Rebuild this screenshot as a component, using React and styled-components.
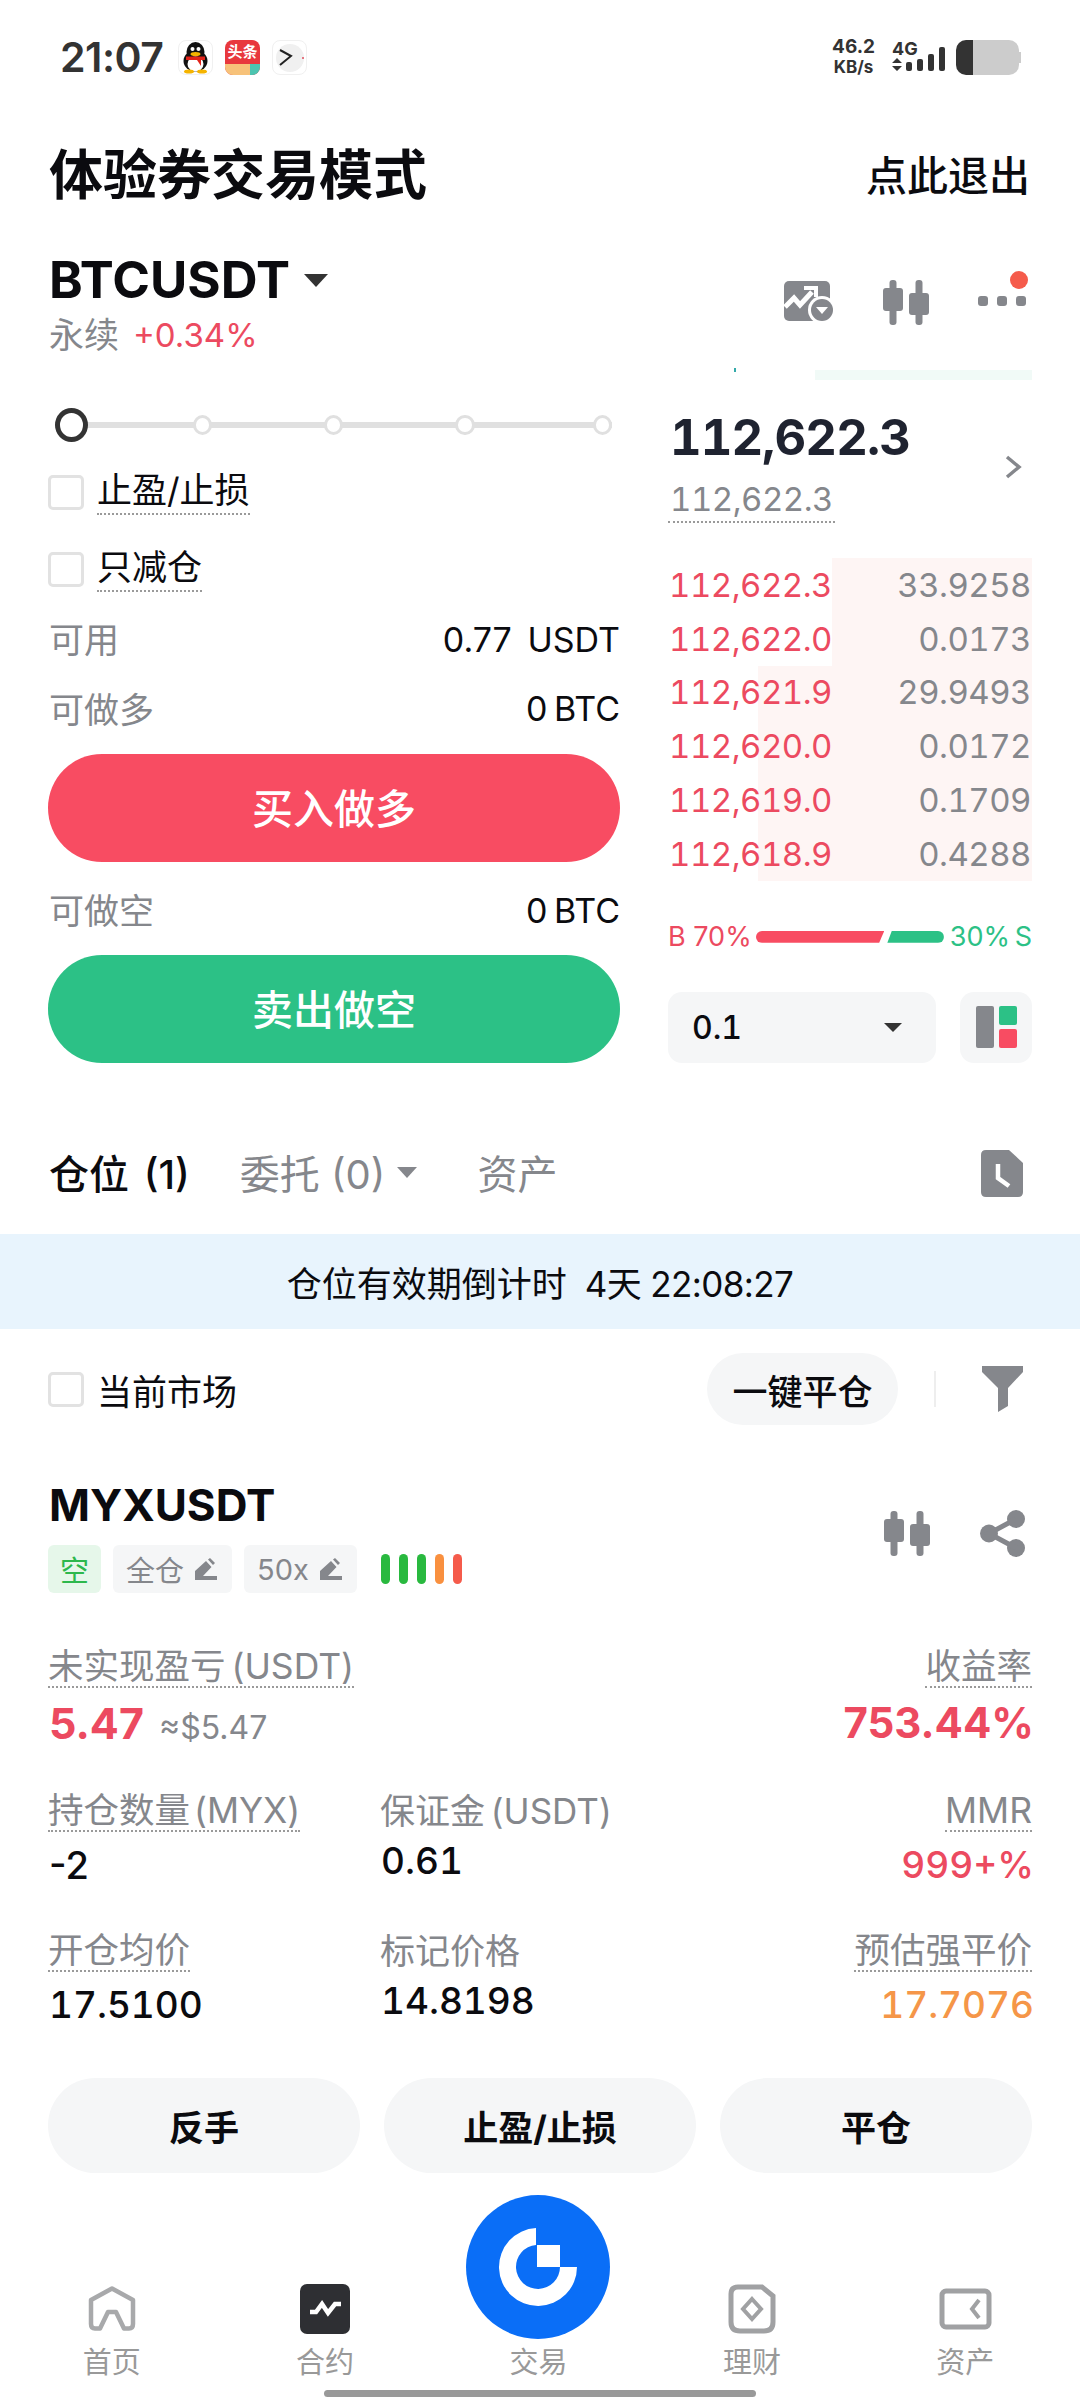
import React from "react";
import styled, { createGlobalStyle } from "styled-components";

const RED = "#f84c62";
const TEXT_RED = "#ec4a60";
const GREEN = "#2cc186";
const GRAY = "#85878c";
const SOFT = "#f5f6f7";

const GlobalStyle = createGlobalStyle`
	* { box-sizing: border-box; }
	html, body { margin: 0; padding: 0; background: #fff; }
	body { font-family: Inter, "Noto Sans CJK SC", sans-serif; color: #0b0b0f; }
`;

const Page = styled.div`
	width: 1080px;
	height: 2400px;
	overflow: hidden;
	background: #fff;
`;

const StatusBar = styled.div`
	height: 114px;
	padding: 0 58px 0 60px;
	display: flex;
	align-items: center;
`;

const Clock = styled.span`
	font-size: 41px;
	font-weight: 600;
	color: #333;
	width: 118px;
	letter-spacing: -0.5px;
`;

const AppIcons = styled.div`
	display: flex;
	gap: 12px;
`;

const AppIcon = styled.div`
	width: 35px;
	height: 35px;
	border-radius: 8px;
	overflow: hidden;
	border: 1px solid #f0f0f0;
	background: #fff;
`;

const NewsIcon = styled(AppIcon)`
	border: 0;
	background: #e8383d;
	display: flex;
	flex-direction: column;
	align-items: center;
	color: #fff;
	font-size: 15px;
	font-weight: 700;
	line-height: 24px;
	&::after {
		content: "";
		align-self: stretch;
		height: 11px;
		background: linear-gradient(90deg, #f7c27a 70%, #4cc4b0 70%);
	}
`;

const StatusRight = styled.div`
	margin-left: auto;
	display: flex;
	align-items: center;
	color: #333;
`;

const Speed = styled.div`
	display: flex;
	flex-direction: column;
	align-items: center;
	font-size: 19px;
	font-weight: 700;
	line-height: 20px;
	margin-right: 16px;
	width: 45px;
	small {
		font-size: 17px;
		font-weight: 700;
		white-space: nowrap;
	}
`;

const Network = styled.div`
	display: flex;
	flex-direction: column;
	font-size: 18px;
	font-weight: 700;
	line-height: 19px;
	margin-right: 11px;
	height: 36px;
`;

const Battery = styled.div`
	position: relative;
	width: 63px;
	height: 35px;
	margin-right: 3px;
	border-radius: 10px;
	background: linear-gradient(90deg, #333 27%, #ccc 27%);
	&::after {
		content: "";
		position: absolute;
		right: -2px;
		top: 12px;
		width: 2px;
		height: 11px;
		background: #ccc;
	}
`;

const HeaderRow = styled.div`
	height: 118px;
	padding: 0 50px 0 49px;
	display: flex;
	align-items: center;
	justify-content: space-between;
`;

const Title = styled.h1`
	margin: 0;
	font-size: 54px;
	font-weight: 700;
	padding-bottom: 3px;
`;

const ExitLink = styled.span`
	font-size: 41px;
	font-weight: 500;
`;

const MarketRow = styled.div`
	margin-top: 24px;
	height: 106px;
	padding: 0 50px 0 49px;
	display: flex;
	justify-content: space-between;
`;

const Symbol = styled.div`
	display: flex;
	align-items: center;
	font-size: 51px;
	font-weight: 700;
	line-height: 48px;
`;

const Caret = styled.i`
	display: inline-block;
	width: 0;
	height: 0;
	margin-left: ${(p) => p.$gap || 14}px;
	border-left: ${(p) => p.$size || 12}px solid transparent;
	border-right: ${(p) => p.$size || 12}px solid transparent;
	border-top: ${(p) => (p.$size || 12) * 1.1}px solid ${(p) => p.$color || "#333"};
`;

const SubLine = styled.div`
	margin-top: 10px;
	font-size: 35px;
	line-height: 42px;
	color: ${GRAY};
	display: flex;
	gap: 14px;
`;

const Change = styled.span`
	color: ${TEXT_RED};
	font-size: 33px;
`;

const MarketIcons = styled.div`
	display: flex;
	align-items: center;
	height: 86px;
	margin-right: 4px;
	gap: 49px;
	padding-top: 6px;
`;

const MoreButton = styled.div`
	position: relative;
	display: flex;
	gap: 9px;
	padding-bottom: 2px;
	&::after {
		content: "";
		position: absolute;
		right: -2px;
		top: -25px;
		width: 18px;
		height: 18px;
		border-radius: 50%;
		background: #f55b4b;
	}
`;

const MoreDot = styled.span`
	width: 10px;
	height: 10px;
	border-radius: 3px;
	background: ${GRAY};
`;

const DepthHint = styled.div`
	position: relative;
	height: 10px;
	margin: 8px 48px 0 815px;
	background: #f1faf7;
	&::before {
		content: "";
		position: absolute;
		left: -81px;
		top: -2px;
		width: 2px;
		height: 4px;
		background: #3aa;
	}
`;

const TradeSection = styled.div`
	padding: 5px 48px 0;
	display: grid;
	grid-template-columns: 572px 364px;
	justify-content: space-between;
`;

const OrderForm = styled.div`
	padding-top: 23px;
	display: flex;
	flex-direction: column;
`;

const Slider = styled.div`
	height: 34px;
	width: 557px;
	margin: 0 0 33px 7px;
	display: flex;
	align-items: center;
	background: linear-gradient(#e0e0e0, #e0e0e0) center / 100% 6px no-repeat;
`;

const Thumb = styled.span`
	width: 34px;
	height: 34px;
	border-radius: 50%;
	background: #fff;
	border: 5px solid #333;
`;

const Knob = styled.span`
	width: 20px;
	height: 20px;
	border-radius: 50%;
	background: #fff;
	border: 3px solid #e0e0e0;
	margin-left: ${(p) => p.$gap}px;
`;

const CheckRow = styled.div`
	height: 52px;
	display: flex;
	align-items: flex-start;
	gap: 13px;
	margin-bottom: ${(p) => p.$gap || 0}px;
`;

const CheckBox = styled.span`
	flex: none;
	width: 36px;
	height: 35px;
	border: 3px solid #e2e2e2;
	border-radius: 5px;
	background: #fff;
`;

const Dotted = styled.span`
	display: block;
	width: fit-content;
	line-height: ${(p) => p.$line || 38}px;
	font-size: ${(p) => p.$size || 35.5}px;
	word-spacing: ${(p) => p.$spacing ?? -4}px;
	color: ${(p) => p.$color || "inherit"};
	border-bottom: 2px dotted #9a9a9a;
`;

const CheckLabel = styled(Dotted)`
	font-size: 35px;
	line-height: 30px;
	padding-bottom: 8px;
`;

const InfoRow = styled.div`
	height: ${(p) => p.$h || 70}px;
	padding: ${(p) => p.$top || 0}px 0 0 1px;
	display: flex;
	align-items: center;
	justify-content: space-between;
	font-size: 35px;
`;

const InfoLabel = styled.span`
	color: ${GRAY};
	padding-bottom: 3px;
`;

const InfoValue = styled.span`
	font-size: 34px;
	word-spacing: ${(p) => p.$spacing}px;
`;

const TradeButton = styled.div`
	height: 108px;
	border-radius: 54px;
	background: ${(p) => p.$bg};
	color: #fff;
	font-size: 41px;
	font-weight: 500;
	padding-bottom: 4px;
	display: flex;
	align-items: center;
	justify-content: center;
	margin-top: ${(p) => p.$top}px;
`;

const BookColumn = styled.div`
	display: flex;
	flex-direction: column;
	font-variant-numeric: tabular-nums;
`;

const PriceBlock = styled.div`
	padding-top: 28px;
	height: 173px;
	position: relative;
`;

const LastPrice = styled.div`
	font-size: 49px;
	font-weight: 700;
	line-height: 50px;
	color: #1f2330;
	padding-left: 2px;
	letter-spacing: -0.9px;
`;

const MarkPrice = styled(Dotted)`
	margin-top: 14px;
	color: ${GRAY};
	padding: 0 2px;
	font-size: 33px;
	letter-spacing: -0.5px;
`;

const Chevron = styled.svg`
	position: absolute;
	right: 10px;
	top: 70px;
`;

const BookRow = styled.div`
	height: 53.8px;
	display: flex;
	justify-content: space-between;
	align-items: center;
	padding: 0 1px 0 1px;
	font-size: 33px;
	letter-spacing: -0.5px;
	background: linear-gradient(90deg, transparent ${(p) => p.$from}px, #fef5f4 ${(p) => p.$from}px);
`;

const BookPrice = styled.span`
	color: ${TEXT_RED};
`;

const BookQty = styled.span`
	color: ${GRAY};
`;

const RatioRow = styled.div`
	margin-top: 40px;
	height: 32px;
	display: flex;
	align-items: center;
	font-size: 27px;
	font-variant-numeric: normal;
`;

const RatioText = styled.span`
	color: ${(p) => p.$color};
	white-space: nowrap;
	word-spacing: ${(p) => p.$spacing || 0}px;
`;

const RatioBar = styled.div`
	height: 12px;
	width: ${(p) => p.$w}px;
	margin: ${(p) => p.$margin};
	background: ${(p) => p.$color};
	border-radius: ${(p) => p.$radius};
	clip-path: ${(p) => p.$clip};
`;

const BookControls = styled.div`
	margin-top: 39px;
	display: flex;
	justify-content: space-between;
`;

const StepSelect = styled.div`
	width: 268px;
	height: 71px;
	border-radius: 14px;
	background: ${SOFT};
	padding: 0 34px 0 24px;
	display: flex;
	align-items: center;
	justify-content: space-between;
	font-size: 32px;
	font-weight: 500;
`;

const LayoutButton = styled.div`
	width: 72px;
	height: 71px;
	border-radius: 14px;
	background: ${SOFT};
	display: flex;
	align-items: center;
	justify-content: center;
`;

const TabBar = styled.div`
	margin-top: 50px;
	height: 121px;
	padding: 0 57px 0 49px;
	display: flex;
	align-items: center;
	font-size: 40px;
`;

const Tab = styled.span`
	display: flex;
	align-items: center;
	padding-bottom: 3px;
	margin-right: ${(p) => p.$gap}px;
	word-spacing: ${(p) => (p.$active ? 4 : 0)}px;
	color: ${(p) => (p.$active ? "#0b0b0f" : GRAY)};
	font-weight: ${(p) => (p.$active ? 500 : 400)};
`;

const TabIcon = styled.div`
	margin-left: auto;
	display: flex;
`;

const Banner = styled.div`
	height: 95px;
	background: #e8f4fd;
	display: flex;
	align-items: center;
	justify-content: center;
	font-size: 35px;
`;

const Countdown = styled.span`
	margin-left: 18px;
	letter-spacing: -0.6px;
`;

const FilterRow = styled.div`
	margin-top: 24px;
	height: 72px;
	padding: 0 57px 0 48px;
	display: flex;
	align-items: center;
	font-size: 35px;
`;

const MarketFilter = styled.div`
	display: flex;
	align-items: center;
	gap: 13px;
`;

const PillButton = styled.div`
	margin-left: auto;
	width: 191px;
	height: 72px;
	border-radius: 36px;
	background: ${SOFT};
	display: flex;
	align-items: center;
	justify-content: center;
	font-weight: 500;
`;

const Divider = styled.span`
	width: 2px;
	height: 36px;
	background: #eee;
	margin: 0 46px 0 36px;
`;

const PositionHead = styled.div`
	margin-top: 60px;
	padding: 0 55px 0 48px;
	display: flex;
	justify-content: space-between;
`;

const PositionName = styled.div`
	font-size: 44px;
	font-weight: 700;
	line-height: 40px;
	padding-left: 1px;
`;

const TagRow = styled.div`
	margin-top: 20px;
	display: flex;
	align-items: center;
	gap: 12px;
`;

const Tag = styled.div`
	height: 48px;
	padding: ${(p) => (p.$side ? "0 12px" : "0 15px 0 13px")};
	border-radius: 6px;
	background: ${(p) => (p.$side ? "#e6f7ea" : SOFT)};
	color: ${(p) => (p.$side ? "#2db84d" : GRAY)};
	font-size: 29px;
	display: flex;
	align-items: center;
	gap: 11px;
`;

const RiskBars = styled.div`
	margin-left: 12px;
	display: flex;
	gap: 9px;
`;

const RiskBar = styled.span`
	width: 9px;
	height: 30px;
	border-radius: 5px;
	background: ${(p) => p.$color};
`;

const PositionIcons = styled.div`
	display: flex;
	align-items: center;
	gap: 50px;
	padding-top: 25px;
	align-self: flex-start;
`;

const DataGrid = styled.div`
	margin-top: 55px;
	padding: 0 48px 0 48px;
	display: grid;
	grid-template-columns: 332px 1fr auto;
	grid-template-rows: 144px 140px 98px;
`;

const DataCell = styled.div`
	grid-column: ${(p) => p.$col};
	display: flex;
	flex-direction: column;
	align-items: ${(p) => (p.$right ? "flex-end" : "flex-start")};
`;

const PlainLabel = styled.span`
	font-size: 35px;
	word-spacing: -4px;
	line-height: 38px;
	height: 36px;
	color: ${GRAY};
`;

const DataValue = styled.div`
	margin-top: ${(p) => p.$top || 8}px;
	line-height: 50px;
	font-size: ${(p) => p.$size || 37}px;
	font-weight: ${(p) => p.$weight || 500};
	font-variant-numeric: ${(p) => (p.$size ? "normal" : "tabular-nums")};
	color: ${(p) => p.$color || "#0b0b0f"};
	padding-left: ${(p) => (p.$right ? 0 : 1)}px;
	margin-right: ${(p) => (p.$right ? -2 : 0)}px;
	display: flex;
	align-items: baseline;
	gap: 15px;
`;

const Approx = styled.span`
	font-size: 32px;
	font-weight: 400;
	color: ${GRAY};
`;

const ActionRow = styled.div`
	margin-top: 48px;
	padding: 0 48px;
	display: grid;
	grid-template-columns: repeat(3, 1fr);
	gap: 24px;
`;

const ActionButton = styled.div`
	height: 95px;
	border-radius: 48px;
	background: ${SOFT};
	font-size: 35px;
	font-weight: 700;
	display: flex;
	align-items: center;
	justify-content: center;
`;

const NavBar = styled.div`
	margin-top: 22px;
	padding: 0 8px 0 5px;
	display: grid;
	grid-template-columns: repeat(5, 1fr);
	align-items: end;
`;

const NavItem = styled.div`
	display: flex;
	flex-direction: column;
	align-items: center;
	font-size: 29px;
	line-height: 40px;
	color: #999;
`;

const NavIcon = styled.div`
	display: flex;
	margin-bottom: ${(p) => p.$gap}px;
`;

const HomeBar = styled.div`
	width: 432px;
	height: 7px;
	border-radius: 4px;
	background: #999;
	margin: 7px auto 0;
`;

const CandleIcon = () => (
	<svg width="46" height="45" viewBox="0 0 46 45" fill={GRAY}>
		<rect x="6.5" y="0" width="7" height="45" rx="3" />
		<rect x="0" y="8" width="20" height="23" rx="3" />
		<rect x="32.5" y="0" width="7" height="45" rx="3" />
		<rect x="26" y="13" width="20" height="22" rx="3" />
	</svg>
);

const ChartCheckIcon = () => (
	<svg width="50" height="42" viewBox="0 0 50 42">
		<rect x="0" y="0" width="46" height="40" rx="5" fill={GRAY} />
		<path d="M1 26 L10 17 L16 24 L28 11" fill="none" stroke="#fff" strokeWidth="5" />
		<path d="M20 7 H32 V16" fill="none" stroke="#fff" strokeWidth="4" />
		<circle cx="38" cy="29" r="14" fill="#fff" />
		<circle cx="38" cy="29" r="11" fill={GRAY} />
		<path d="M32 26 H44 L38 33 Z" fill="#fff" />
	</svg>
);

const LayoutIcon = () => (
	<svg width="41" height="42" viewBox="0 0 41 42">
		<rect x="0" y="0" width="18" height="42" rx="2" fill={GRAY} />
		<rect x="23" y="0" width="18" height="19" rx="2" fill={GREEN} />
		<rect x="23" y="23" width="18" height="19" rx="2" fill={RED} />
	</svg>
);

const OrdersIcon = () => (
	<svg width="42" height="47" viewBox="0 0 42 47">
		<path d="M5 0 H28 L42 13 V42 Q42 47 37 47 H5 Q0 47 0 42 V5 Q0 0 5 0 Z" fill={GRAY} />
		<path d="M17 14 V28 L28 36" fill="none" stroke="#fff" strokeWidth="4.5" />
	</svg>
);

const FilterIcon = () => (
	<svg width="41" height="46" viewBox="0 0 41 46" fill={GRAY}>
		<path d="M0 0 H41 V6 L26 22 V40 L16 46 V22 L0 6 Z" />
	</svg>
);

const ShareIcon = () => (
	<svg width="45" height="47" viewBox="0 0 45 47" fill={GRAY}>
		<circle cx="36" cy="9" r="9" />
		<circle cx="9" cy="23.5" r="9" />
		<circle cx="36" cy="38" r="9" />
		<path d="M36 9 L9 23.5 L36 38" fill="none" stroke={GRAY} strokeWidth="5" />
	</svg>
);

const PenIcon = () => (
	<svg width="22" height="22" viewBox="0 0 22 22" fill={GRAY}>
		<path d="M0 22 V13 L11 3 L16.5 9 L8 18 H22 V22 Z" />
		<path d="M13 1.5 L15 0 L20 5 L18 7 Z" />
	</svg>
);

const QQIcon = () => (
	<svg width="33" height="33" viewBox="0 0 33 33">
		<ellipse cx="16.5" cy="20" rx="12" ry="10.5" fill="#111" />
		<ellipse cx="16.5" cy="11" rx="9" ry="10" fill="#111" />
		<ellipse cx="16.5" cy="23" rx="8" ry="7.5" fill="#fff" />
		<circle cx="13.5" cy="8" r="2" fill="#fff" />
		<circle cx="19.5" cy="8" r="2" fill="#fff" />
		<ellipse cx="16.5" cy="13" rx="5" ry="2" fill="#f5b400" />
		<path d="M7 15.5 H26 V19 H22 V25 L18 19 H7 Z" fill="#e2231a" />
		<ellipse cx="10" cy="30.5" rx="5" ry="2" fill="#f5b400" />
		<ellipse cx="23" cy="30.5" rx="5" ry="2" fill="#f5b400" />
	</svg>
);

const DialIcon = () => (
	<svg width="33" height="33" viewBox="0 0 33 33">
		<circle cx="17" cy="17" r="14" fill="#f0f0f0" />
		<path d="M7 9 L18 15 L7 24" fill="none" stroke="#222" strokeWidth="2" />
		<circle cx="30" cy="17" r="1" fill="#e2505f" />
	</svg>
);

const SignalIcon = () => (
	<svg width="53" height="14" viewBox="0 0 53 14" fill="#333" style={{ overflow: "visible" }}>
		<path d="M5 0 L10 5 H0 Z M0 8 H10 L5 13 Z" />
		<rect x="14" y="4" width="6" height="9" rx="2" />
		<rect x="25" y="1" width="6" height="12" rx="2" />
		<rect x="36" y="-4" width="6" height="17" rx="2" />
		<rect x="47" y="-11" width="6" height="24" rx="2" />
	</svg>
);

const HomeIcon = () => (
	<svg width="48" height="45" viewBox="0 0 48 45" fill="none" stroke="#a8a9ab" strokeWidth="4.5" strokeLinejoin="round">
		<path d="M3 14 L24 2.5 L45 14 V38 Q45 42.5 41 42.5 H36 L28 26 H20 L12 42.5 H7 Q3 42.5 3 38 Z" />
	</svg>
);

const ContractIcon = () => (
	<svg width="50" height="50" viewBox="0 0 50 50">
		<rect width="50" height="50" rx="7" fill="#2e2f33" />
		<path d="M10 28 H16 L22 20 L28 29 L35 20 H41" fill="none" stroke="#fff" strokeWidth="4.5" />
	</svg>
);

const EarnIcon = () => (
	<svg width="48" height="50" viewBox="0 0 48 50" fill="none" stroke="#a0a1a3" strokeWidth="5">
		<path d="M10 3 H34 L45 12 V38 Q45 47 36 47 H12 Q3 47 3 38 V10 Q3 3 10 3 Z" />
		<path d="M24 15 L33 25 L24 35 L15 25 Z" strokeWidth="4" />
	</svg>
);

const AssetsIcon = () => (
	<svg width="53" height="42" viewBox="0 0 53 42" fill="none" stroke="#a0a1a3" strokeWidth="5">
		<rect x="3" y="3" width="47" height="36" rx="4" />
		<path d="M40 12 L33 21 L40 30" strokeWidth="4" />
	</svg>
);

const LogoIcon = () => (
	<svg width="144" height="144" viewBox="0 0 144 144">
		<circle cx="72" cy="72" r="72" fill="#0a6ef7" />
		<path
			d="M70 33 V50 A22 22 0 1 0 94 72 H111 A39 39 0 1 1 70 33 Z"
			fill="#fff"
		/>
		<rect x="71" y="50" width="23" height="22" fill="#fff" />
	</svg>
);

const slides = [105, 112, 112, 118];

const asks = [
	["112,622.3", "33.9258", 164],
	["112,622.0", "0.0173", 164],
	["112,621.9", "29.9493", 90],
	["112,620.0", "0.0172", 90],
	["112,619.0", "0.1709", 90],
	["112,618.9", "0.4288", 90],
];

const risks = ["#29b93f", "#29b93f", "#29b93f", "#f9903f", "#f55b4b"];

const App = () => (
	<Page>
		<GlobalStyle />
		<StatusBar>
			<Clock>21:07</Clock>
			<AppIcons>
				<AppIcon><QQIcon /></AppIcon>
				<NewsIcon>头条</NewsIcon>
				<AppIcon><DialIcon /></AppIcon>
			</AppIcons>
			<StatusRight>
				<Speed>46.2<small>KB/s</small></Speed>
				<Network>
					4G
					<SignalIcon />
				</Network>
				<Battery />
			</StatusRight>
		</StatusBar>

		<HeaderRow>
			<Title>体验券交易模式</Title>
			<ExitLink>点此退出</ExitLink>
		</HeaderRow>

		<MarketRow>
			<div>
				<Symbol>BTCUSDT<Caret /></Symbol>
				<SubLine>永续<Change>+0.34%</Change></SubLine>
			</div>
			<MarketIcons>
				<ChartCheckIcon />
				<CandleIcon />
				<MoreButton>
					<MoreDot />
					<MoreDot />
					<MoreDot />
				</MoreButton>
			</MarketIcons>
		</MarketRow>
		<DepthHint />

		<TradeSection>
			<OrderForm>
				<Slider>
					<Thumb />
					{slides.map((gap, i) => (
						<Knob key={i} $gap={gap} />
					))}
				</Slider>
				<CheckRow $gap={25}>
					<CheckBox />
					<CheckLabel>止盈/止损</CheckLabel>
				</CheckRow>
				<CheckRow>
					<CheckBox />
					<CheckLabel>只减仓</CheckLabel>
				</CheckRow>
				<InfoRow>
					<InfoLabel>可用</InfoLabel>
					<InfoValue $spacing={6}>0.77 USDT</InfoValue>
				</InfoRow>
				<InfoRow $h={69}>
					<InfoLabel>可做多</InfoLabel>
					<InfoValue $spacing={-3}>0 BTC</InfoValue>
				</InfoRow>
				<TradeButton $bg={RED} $top={11}>买入做多</TradeButton>
				<InfoRow $h={83} $top={13}>
					<InfoLabel>可做空</InfoLabel>
					<InfoValue $spacing={-3}>0 BTC</InfoValue>
				</InfoRow>
				<TradeButton $bg={GREEN} $top={10}>卖出做空</TradeButton>
			</OrderForm>

			<BookColumn>
				<PriceBlock>
					<LastPrice>112,622.3</LastPrice>
					<MarkPrice $line={44} $spacing={0}>112,622.3</MarkPrice>
					<Chevron width="17" height="24" viewBox="0 0 17 24" fill="none" stroke={GRAY} strokeWidth="3.5">
						<path d="M2 2 L14 12 L2 22" />
					</Chevron>
				</PriceBlock>
				{asks.map(([price, qty, from]) => (
					<BookRow key={price} $from={from}>
						<BookPrice>{price}</BookPrice>
						<BookQty>{qty}</BookQty>
					</BookRow>
				))}
				<RatioRow>
					<RatioText $color={TEXT_RED}>B 70%</RatioText>
					<RatioBar
						$w={132}
						$margin="0 3px 0 4px"
						$color={RED}
						$radius="6px 0 0 6px"
						$clip="polygon(0 0, 100% 0, 96% 100%, 0 100%)"
					/>
					<RatioBar
						$w={58}
						$margin="0 6px 0 0"
						$color={GREEN}
						$radius="0 6px 6px 0"
						$clip="polygon(8% 0, 100% 0, 100% 100%, 0 100%)"
					/>
					<RatioText $color={GREEN} $spacing={-3}>30% S</RatioText>
				</RatioRow>
				<BookControls>
					<StepSelect>
						0.1
						<Caret $size={9} $gap={0} />
					</StepSelect>
					<LayoutButton><LayoutIcon /></LayoutButton>
				</BookControls>
			</BookColumn>
		</TradeSection>

		<TabBar>
			<Tab $active $gap={50}>仓位 (1)</Tab>
			<Tab $gap={60}>委托 (0)<Caret $size={10} $gap={12} $color={GRAY} /></Tab>
			<Tab>资产</Tab>
			<TabIcon><OrdersIcon /></TabIcon>
		</TabBar>

		<Banner>仓位有效期倒计时<Countdown>4天 22:08:27</Countdown></Banner>

		<FilterRow>
			<MarketFilter>
				<CheckBox />
				当前市场
			</MarketFilter>
			<PillButton>一键平仓</PillButton>
			<Divider />
			<FilterIcon />
		</FilterRow>

		<PositionHead>
			<div>
				<PositionName>MYXUSDT</PositionName>
				<TagRow>
					<Tag $side>空</Tag>
					<Tag>全仓<PenIcon /></Tag>
					<Tag>50x<PenIcon /></Tag>
					<RiskBars>
						{risks.map((color, i) => (
							<RiskBar key={i} $color={color} />
						))}
					</RiskBars>
				</TagRow>
			</div>
			<PositionIcons>
				<CandleIcon />
				<ShareIcon />
			</PositionIcons>
		</PositionHead>

		<DataGrid>
			<DataCell $col={1}>
				<Dotted $color={GRAY}>未实现盈亏 (USDT)</Dotted>
				<DataValue $top={10} $size={43} $weight={700} $color={TEXT_RED}>
					5.47<Approx>≈$5.47</Approx>
				</DataValue>
			</DataCell>
			<DataCell $col={3} $right>
				<Dotted $color={GRAY}>收益率</Dotted>
				<DataValue $top={10} $right $size={42} $weight={700} $color={TEXT_RED}>753.44%</DataValue>
			</DataCell>

			<DataCell $col={1}>
				<Dotted $color={GRAY} $spacing={-6}>持仓数量 (MYX)</Dotted>
				<DataValue $size={38}>-2</DataValue>
			</DataCell>
			<DataCell $col={2}>
				<PlainLabel>保证金 (USDT)</PlainLabel>
				<DataValue>0.61</DataValue>
			</DataCell>
			<DataCell $col={3} $right>
				<Dotted $color={GRAY}>MMR</Dotted>
				<DataValue $right $color={TEXT_RED}>999+%</DataValue>
			</DataCell>

			<DataCell $col={1}>
				<Dotted $color={GRAY}>开仓均价</Dotted>
				<DataValue>17.5100</DataValue>
			</DataCell>
			<DataCell $col={2}>
				<PlainLabel>标记价格</PlainLabel>
				<DataValue>14.8198</DataValue>
			</DataCell>
			<DataCell $col={3} $right>
				<Dotted $color={GRAY}>预估强平价</Dotted>
				<DataValue $right $color="#f59648">17.7076</DataValue>
			</DataCell>
		</DataGrid>

		<ActionRow>
			<ActionButton>反手</ActionButton>
			<ActionButton>止盈/止损</ActionButton>
			<ActionButton>平仓</ActionButton>
		</ActionRow>

		<NavBar>
			<NavItem><NavIcon $gap={12}><HomeIcon /></NavIcon>首页</NavItem>
			<NavItem><NavIcon $gap={9}><ContractIcon /></NavIcon>合约</NavItem>
			<NavItem><NavIcon $gap={4}><LogoIcon /></NavIcon>交易</NavItem>
			<NavItem><NavIcon $gap={9}><EarnIcon /></NavIcon>理财</NavItem>
			<NavItem><NavIcon $gap={13}><AssetsIcon /></NavIcon>资产</NavItem>
		</NavBar>
		<HomeBar />
	</Page>
);

export default App;
